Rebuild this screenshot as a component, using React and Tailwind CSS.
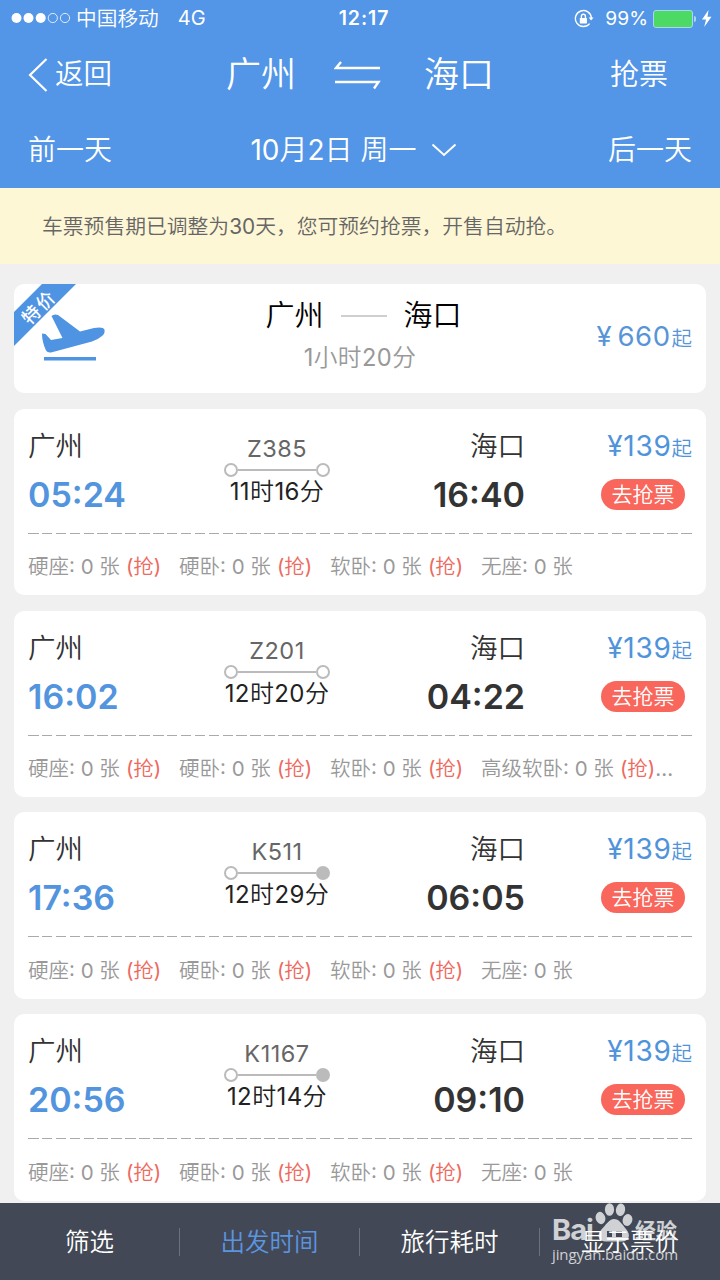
import React, { useState } from 'react';

const trains = [
  { no: 'Z385', depart: '05:24', arrive: '16:40', duration: '11时16分', terminal: false, lastSeat: '无座' },
  { no: 'Z201', depart: '16:02', arrive: '04:22', duration: '12时20分', terminal: false, lastSeat: '高级软卧', more: true },
  { no: 'K511', depart: '17:36', arrive: '06:05', duration: '12时29分', terminal: true, lastSeat: '无座' },
  { no: 'K1167', depart: '20:56', arrive: '09:10', duration: '12时14分', terminal: true, lastSeat: '无座' },
];

const tabs = ['筛选', '出发时间', '旅行耗时', '显示票价'];

const StatusBar = () => (
  <div className="grid h-[37px] grid-cols-3 items-center pl-[11px] pr-2 text-[19px] leading-none">
    <div className="flex items-center">
      <svg className="mr-[6px] h-[12px] w-[59px]" viewBox="0 0 59 12" fill="none" stroke="currentColor">
        <circle cx="5.5" cy="6" r="5" fill="currentColor" stroke="none" />
        <circle cx="17.5" cy="6" r="5" fill="currentColor" stroke="none" />
        <circle cx="29.7" cy="6" r="5" fill="currentColor" stroke="none" />
        <circle cx="41.8" cy="6" r="4.6" strokeWidth="0.8" />
        <circle cx="54" cy="6" r="4.6" strokeWidth="0.8" />
      </svg>
      <span className="mt-[2px] text-[20.7px]">中国移动</span>
      <span className="ml-[19px] text-[20px]">4G</span>
    </div>
    <div className="pl-[5px] text-center text-[19.5px] font-semibold tracking-[0.9px]">12:17</div>
    <div className="flex items-center justify-end">
      <svg className="mr-[11px] h-5 w-5" viewBox="0 0 20 20" fill="none" stroke="currentColor" strokeWidth="1.4">
        <path d="M15.6 14.6A8 8 0 1 1 17.4 9" />
        <path d="M14.6 8.6h5l-2.5 3z" fill="currentColor" stroke="none" />
        <rect x="5.8" y="9" width="7.2" height="5.4" rx="0.6" fill="currentColor" stroke="none" />
        <path d="M7.4 9V7.2a2 2 0 0 1 4 0V9" />
      </svg>
      <span className="text-[19.2px]">99%</span>
      <div className="ml-[5px] h-[18px] w-[40px] rounded-[3px] border border-[#a9d6f0] bg-[#4cd964]" />
      <div className="ml-px h-[6px] w-[2px] rounded-r-full bg-[#a9d6f0]" />
      <svg className="ml-[5px] h-[17px] w-[11px]" viewBox="0 0 11 17" fill="currentColor">
        <path d="M7.5 0 1 9.5h4L3.2 17 10.5 6.8h-4z" />
      </svg>
    </div>
  </div>
);

const Header = () => (
  <header className="h-[188px] shrink-0 bg-[#5395e6] text-white">
    <StatusBar />
    <div className="grid h-[75px] grid-cols-[1fr_auto_1fr] items-center px-7">
      <button className="flex items-center text-[28.5px]">
        <svg className="mr-[7px] h-[36px] w-[20px]" viewBox="0 0 20 36" fill="none" stroke="currentColor" strokeWidth="2.2">
          <path d="M18.5 2 2 18l16.5 16" />
        </svg>
        返回
      </button>
      <div className="flex items-center text-[35px]">
        <span>广州</span>
        <svg className="ml-[38px] mr-[42px] h-[32px] w-[48px]" viewBox="0 0 48 32" fill="none" stroke="currentColor" strokeWidth="2.4">
          <path d="M46 9H2L7 3M1 23h43.5L40 29.5" />
        </svg>
        <span>海口</span>
      </div>
      <button className="justify-self-end pr-6 text-[29px]">抢票</button>
    </div>
    <div className="grid h-[76px] grid-cols-[1fr_auto_1fr] items-center px-7 text-[28px]">
      <button className="justify-self-start">前一天</button>
      <button className="mr-[13px] flex items-center">
        10月2日 周一
        <svg className="ml-[14px] h-[14px] w-[26px]" viewBox="0 0 26 14" fill="none" stroke="currentColor" strokeWidth="2">
          <path d="M1.5 1.5 13 12 24.5 1.5" />
        </svg>
      </button>
      <button className="justify-self-end">后一天</button>
    </div>
  </header>
);

const FlightCard = () => (
  <section className="relative grid h-[109px] shrink-0 grid-cols-[1fr_200px_1fr] overflow-hidden rounded-[10px] bg-white">
    <svg className="h-[109px] w-[110px]" viewBox="0 0 110 109" fill="#4f93e3">
      <path d="M28 0H62L0 62V28z" />
      <path d="M37.5 32Q40 29.5 44 31L66 47.5 80 44Q89 42.5 90.5 45.5 91 50 88 52 84 55.5 78 57.5L37 68.5Q33.5 69 32 66.5 28 58 28 49.5L31.5 50 37 56 48.5 54z" />
      <path d="M30 73h52v3.5H30z" />
    </svg>
    <span className="absolute left-0 top-[12px] w-[48px] -rotate-45 text-center font-['Noto_Sans_CJK_SC',sans-serif] text-[18px] font-medium leading-[20px] tracking-[2px] text-white">
      特价
    </span>
    <div className="flex flex-col items-center whitespace-nowrap">
      <div className="ml-[7px] mt-[9px] flex h-[46px] items-center text-[29px] text-black">
        广州
        <span className="mx-[17px] h-[2px] w-[46px] bg-[#cfcfcf]" />
        海口
      </div>
      <div className="mt-px h-[36px] text-[23.7px] leading-[36px] tracking-[0.4px] text-[#999]">1小时20分</div>
    </div>
    <div className="flex items-baseline justify-end pr-[14px] pt-[30px] text-[27.5px] leading-[44px] text-[#5795d8]">
      ¥<span className="ml-[6px] tracking-[0.5px]">660</span>
      <span className="ml-px text-[20.5px]">起</span>
    </div>
  </section>
);

const Seat = ({ name, grab, more }) => (
  <span className="w-[151px] shrink-0 whitespace-nowrap">
    {name}: 0 张
    {grab && <span className="ml-[6px] text-[#ee6a60]">(抢)</span>}
    {more && '...'}
  </span>
);

const TrainCard = ({ train }) => (
  <section className="h-[186.2px] shrink-0 rounded-[10px] bg-white px-[14px]">
    <div className="grid h-[123px] grid-cols-[160px_178px_159px_1fr]">
      <div className="pt-[17px]">
        <div className="h-[40px] text-[27.5px] leading-[40px] text-[#333]">广州</div>
        <div className="mt-[5px] h-[48px] text-[34px] font-semibold leading-[48px] text-[#5294de]">{train.depart}</div>
      </div>
      <div className="flex flex-col items-center pt-[24px]">
        <div className="h-[30px] text-[23.5px] leading-[31px] tracking-[0.5px] text-[#666]">{train.no}</div>
        <div className="flex h-[14px] items-center">
          <span className="size-[14px] rounded-full border-2 border-[#bbb]" />
          <span className="h-[2px] w-[78px] bg-[#bbb]" />
          <span className={`size-[14px] rounded-full border-2 border-[#bbb] ${train.terminal ? 'bg-[#bbb]' : ''}`} />
        </div>
        <div className="h-[30px] text-[24px] leading-[30px] tracking-[0.4px] text-[#222]">{train.duration}</div>
      </div>
      <div className="pt-[17px] text-right text-[#333]">
        <div className="h-[40px] text-[27.5px] leading-[40px]">海口</div>
        <div className="mt-[5px] h-[48px] text-[34px] font-semibold leading-[48px]">{train.arrive}</div>
      </div>
      <div className="flex flex-col items-end pt-[17px]">
        <div className="h-[41px] text-[28px] leading-[40px] text-[#4f94db]">
          <span className="tracking-[0.7px]">¥139</span>
          <span className="text-[20.5px]">起</span>
        </div>
        <button className="mr-[7px] mt-[12px] h-[31px] w-[84px] rounded-full bg-[#f9665c] text-[21px] leading-[32px] text-white">
          去抢票
        </button>
      </div>
    </div>
    <div className="mt-px h-px bg-[repeating-linear-gradient(to_right,#aaa_0_10.5px,transparent_10.5px_13.9px)]" />
    <div className="mt-[17.5px] flex h-[32px] text-[20.5px] leading-[32px] text-[#999]">
      <Seat name="硬座" grab />
      <Seat name="硬卧" grab />
      <Seat name="软卧" grab />
      <Seat name={train.lastSeat} grab={train.more} more={train.more} />
    </div>
  </section>
);

const Watermark = () => (
  <div className="pointer-events-none absolute left-[552px] top-0 h-[77px] w-[140px] text-white/75">
    <div className="flex h-[40px] items-end">
      <span className="w-[43px] text-[29px] font-bold leading-[26px] tracking-[-1px]">Bai</span>
      <svg className="h-[40px] w-[38px]" viewBox="0 0 38 40" fill="currentColor">
        <ellipse cx="5.5" cy="15" rx="4.8" ry="6.2" transform="rotate(-15 5.5 15)" />
        <ellipse cx="14.5" cy="6.5" rx="4.6" ry="6.3" />
        <ellipse cx="25.5" cy="6.8" rx="4.6" ry="6.3" transform="rotate(8 25.5 6.8)" />
        <ellipse cx="32.5" cy="17" rx="4.8" ry="6" transform="rotate(15 32.5 17)" />
        <path fillRule="evenodd" d="M19 16c5 0 8 5 12 10 6 7 2 13-5 12.5H12C4 39 1 33 6 27c5-5 8-11 13-11zM12 28v6h5v-6zM21 28v6h6v-6z" />
      </svg>
      <span className="ml-[2px] font-['Noto_Sans_CJK_SC',sans-serif] text-[21px] font-bold leading-[27px]">经验</span>
    </div>
    <div className="font-['Open_Sans',sans-serif] text-[15px] font-medium leading-[23px] tracking-[-0.1px]">jingyan.baidu.com</div>
  </div>
);

const BottomTabs = () => {
  const [active, setActive] = useState(1);

  return (
    <nav className="relative h-[77px] shrink-0 bg-[#424855]">
      <div className="grid h-full grid-cols-4 items-center divide-x divide-[#6b7180] text-[24.5px]">
        {tabs.map((tab, i) => (
          <button
            key={tab}
            onClick={() => setActive(i)}
            className={`h-[28px] leading-[28px] ${i === active ? 'text-[#5b95e0]' : 'text-white'}`}
          >
            {tab}
          </button>
        ))}
      </div>
      <Watermark />
    </nav>
  );
};

const App = () => (
  <div className="flex h-[1280px] w-[720px] flex-col overflow-hidden bg-[#f0f0f0] font-['Inter','Noto_Sans_CJK_SC_DemiLight','Noto_Sans_CJK_SC',sans-serif] font-normal">
    <Header />
    <div className="h-[76px] shrink-0 bg-[#fef7d5] pl-[42px] text-[20.8px] leading-[77px] text-[#666]">
      车票预售期已调整为30天，您可预约抢票，开售自动抢。
    </div>
    <main className="flex min-h-0 flex-1 flex-col gap-[15.7px] overflow-hidden px-[14px] pt-5">
      <FlightCard />
      {trains.map((train) => (
        <TrainCard key={train.no} train={train} />
      ))}
    </main>
    <BottomTabs />
  </div>
);

export default App;
